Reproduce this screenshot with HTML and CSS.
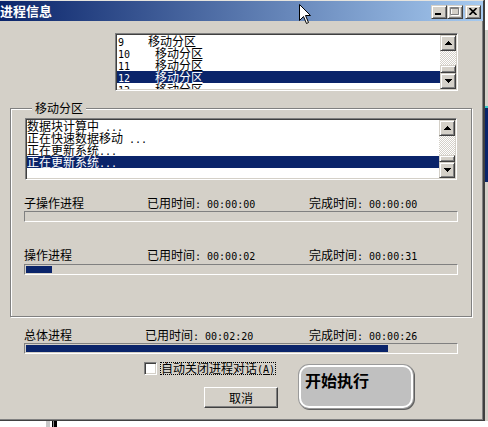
FILE: index.html
```html
<!DOCTYPE html>
<html lang="zh-CN">
<head>
<meta charset="utf-8">
<title>进程信息</title>
<link rel="stylesheet" href="styles.css">
</head>
<body>
<div class="screen">
  <div class="window">
    <div class="titlebar">
      <span class="title">进程信息</span>
      <div class="tbtns">
        <span class="tbtn"><svg width="8" height="7" viewBox="0 0 8 7"><rect x="0" y="5" width="6" height="2" fill="#000"/></svg></span>
        <span class="tbtn"><svg width="10" height="9" viewBox="0 0 10 9"><path d="M1.5 1.5h8v7h-8z" fill="none" stroke="#fff"/><path d="M0.5 0.5h8v7h-8z M0.5 1.5h8" fill="none" stroke="#808080"/></svg></span>
        <span class="tbtn close"><svg width="8" height="7" viewBox="0 0 8 7"><path d="M0.5 0 L7.5 7 M7.5 0 L0.5 7" stroke="#000" stroke-width="1.6"/></svg></span>
      </div>
    </div>
    <div class="client">
      <div class="listbox top">
        <div class="rows">
          <div class="row"><span class="a n n9">9</span>移动分区</div>
          <div class="row"><span class="a n">10</span>移动分区</div>
          <div class="row"><span class="a n">11</span>移动分区</div>
          <div class="row sel"><span class="a n">12</span>移动分区</div>
          <div class="row"><span class="a n">13</span>移动分区</div>
        </div>
        <div class="sb">
          <span class="sbtn"><svg width="7" height="4" viewBox="0 0 7 4"><path d="M3 0h1v1h1v1h1v1h1v1H0V3h1V2h1V1h1z" fill="#000"/></svg></span>
          <span class="track"></span>
          <span class="thumb"></span>
          <span class="sbtn"><svg width="7" height="4" viewBox="0 0 7 4"><path d="M0 0h7v1H6v1H5v1H4v1H3V3H2V2H1V1H0z" fill="#000"/></svg></span>
        </div>
      </div>

      <fieldset class="group">
        <legend>移动分区</legend>
        <div class="listbox glist">
          <div class="rows">
            <div class="row">数据块计算中<span class="a"> ...</span></div>
            <div class="row">正在快速数据移动<span class="a"> ...</span></div>
            <div class="row">正在更新系统<span class="a">...</span></div>
            <div class="row sel">正在更新系统<span class="a">...</span></div>
          </div>
          <div class="sb">
            <span class="sbtn"><svg width="7" height="4" viewBox="0 0 7 4"><path d="M3 0h1v1h1v1h1v1h1v1H0V3h1V2h1V1h1z" fill="#000"/></svg></span>
            <span class="track"></span>
            <span class="thumb"></span>
            <span class="sbtn"><svg width="7" height="4" viewBox="0 0 7 4"><path d="M0 0h7v1H6v1H5v1H4v1H3V3H2V2H1V1H0z" fill="#000"/></svg></span>
          </div>
        </div>

        <div class="prow p1">
          <span>子操作进程</span>
          <span>已用时间<span class="a">: 00:00:00</span></span>
          <span>完成时间<span class="a">: 00:00:00</span></span>
        </div>
        <div class="bar"><div class="fill" style="width:0px"></div></div>

        <div class="prow p2">
          <span>操作进程</span>
          <span>已用时间<span class="a">: 00:00:02</span></span>
          <span>完成时间<span class="a">: 00:00:31</span></span>
        </div>
        <div class="bar b2"><div class="fill" style="width:26px"></div></div>
      </fieldset>

      <div class="total">
        <div class="prow">
          <span>总体进程</span>
          <span>已用时间<span class="a">: 00:02:20</span></span>
          <span>完成时间<span class="a">: 00:00:26</span></span>
        </div>
        <div class="bar"><div class="fill" style="width:362px"></div></div>
      </div>

      <div class="bottom">
        <div class="bl">
          <div class="chk">
            <span class="box"></span>
            <span class="lbl">自动关闭进程对话<span class="a">(<u>A</u>)</span></span>
          </div>
          <button class="cancel">取消</button>
        </div>
        <button class="start">开始执行</button>
      </div>
    </div>
    <svg class="cursor" width="13" height="21" viewBox="0 0 13 21"><path d="M0.5 0.5 V16.5 L4.5 12.5 L7.5 19.5 L9.5 18.5 L6.5 11.5 H11.5 Z" fill="#fff" stroke="#000" stroke-linejoin="miter"/></svg>
  </div>
  <div class="side"></div>
</div>
<div class="below"></div>
</body>
</html>
```

FILE: styles.css
```css
* { box-sizing: border-box; }
html, body { margin: 0; padding: 0; }
body {
  width: 488px;
  height: 427px;
  overflow: hidden;
  background: #fff;
  font-family: "Noto Sans CJK SC", sans-serif;
  font-size: 12px;
  color: #000;
}
.a {
  font-family: "DejaVu Sans Mono", monospace;
  font-size: 10px;
}
.screen { display: flex; }

.window {
  position: relative;
  width: 484px;
  height: 421px;
  background: #d4d0c8;
  border-top: 1px solid #e6e4de;
  border-right: 1px solid #404040;
  border-bottom: 1px solid #404040;
  box-shadow: inset -1px -1px 0 #808080;
  display: flex;
  flex-direction: column;
}

.titlebar {
  height: 20px;
  flex: none;
  display: flex;
  align-items: center;
  justify-content: space-between;
  padding: 0 2px 0 0;
  background: linear-gradient(to right, #0a246a, #a6caf0);
}
.title {
  color: #fff;
  font-weight: bold;
  font-size: 13px;
  line-height: 16px;
  padding-left: 0;
}
.tbtns { display: flex; margin-top: 1px; }
.tbtn {
  width: 16px;
  height: 14px;
  display: flex;
  align-items: center;
  justify-content: center;
  background: #d4d0c8;
  border: 1px solid;
  border-color: #d4d0c8 #404040 #404040 #d4d0c8;
  box-shadow: inset 1px 1px 0 #fff, inset -1px -1px 0 #808080;
}
.tbtn svg { display: block; }
.tbtn.close { margin-left: 2px; }

.client {
  flex: 1;
  display: flex;
  flex-direction: column;
}

.listbox {
  display: flex;
  background: #fff;
  border: 1px solid;
  border-color: #808080 #fff #fff #808080;
  box-shadow: inset 1px 1px 0 #404040, inset -1px -1px 0 #d4d0c8;
  padding: 1px;
}
.listbox.top {
  margin: 12px 0 0 115px;
  width: 343px;
  height: 58px;
}
.rows {
  flex: 1;
  overflow: hidden;
  background: #fff;
}
.row {
  height: 12px;
  line-height: 12px;
  white-space: nowrap;
  padding-left: 1px;
}
.glist .row { padding-left: 0; }
.row.sel { background: #0a246a; color: #fff; }
.n { display: inline-block; width: 37px; }
.n.n9 { width: 30px; }

.sb {
  width: 16px;
  flex: none;
  display: flex;
  flex-direction: column;
}
.sbtn, .thumb {
  background: #d4d0c8;
  border: 1px solid;
  border-color: #d4d0c8 #404040 #404040 #d4d0c8;
  box-shadow: inset 1px 1px 0 #fff, inset -1px -1px 0 #808080;
}
.sbtn {
  height: 16px;
  flex: none;
  display: flex;
  align-items: center;
  justify-content: center;
}
.sbtn svg { display: block; }
.track {
  flex: 1;
  background: repeating-conic-gradient(#fff 0 25%, #d4d0c8 0 50%) 0 0 / 2px 2px;
}
.thumb { flex: none; height: 8px; }
.glist .thumb { height: 7px; }

.group {
  margin: 10px 0 0 10px;
  width: 462px;
  min-width: 0;
  border: 1px solid #808080;
  box-shadow: 1px 1px 0 #fff, inset 1px 1px 0 #fff;
  padding: 3px 14px 41px 14px;
}
.group legend {
  margin-left: 7px;
  padding: 0 3px;
  height: 14px;
  line-height: 14px;
  background: #d4d0c8;
}
.listbox.glist { height: 62px; }

.prow {
  display: grid;
  grid-template-columns: 123px 162px auto;
  height: 12px;
  line-height: 12px;
  white-space: nowrap;
  margin: 0 -1px;
}
.prow.p1 { margin-top: 17px; }
.prow.p2 { margin-top: 27px; }

.bar {
  height: 11px;
  margin: 2px -1px 0;
  border: 1px solid;
  border-color: #808080 #fff #fff #808080;
  padding: 1px;
}
.bar.b2 { margin-top: 3px; }
.fill { height: 100%; background: #0a246a; }

.total {
  margin: 12px 0 0 24px;
  width: 434px;
}
.total .prow {
  margin: 0;
  grid-template-columns: 121px 164px auto;
}
.total .bar { margin: 2px 0 0; }

.bottom {
  display: flex;
  align-items: flex-start;
  margin: 8px 0 0 144px;
}
.bl {
  width: 134px;
  display: flex;
  flex-direction: column;
}
.chk {
  display: flex;
  align-items: center;
  height: 13px;
}
.box {
  width: 13px;
  height: 13px;
  background: #fff;
  border: 1px solid;
  border-color: #808080 #fff #fff #808080;
  box-shadow: inset 1px 1px 0 #404040, inset -1px -1px 0 #d4d0c8;
}
.lbl {
  margin-left: 3px;
  padding: 0 1px;
  height: 13px;
  line-height: 12px;
  outline: 1px dotted #000;
  outline-offset: -1px;
  white-space: nowrap;
}
button {
  font-family: inherit;
  color: #000;
  margin: 0;
  cursor: default;
}
.cancel {
  align-self: flex-end;
  margin-top: 12px;
  width: 74px;
  height: 21px;
  padding: 0;
  font-size: 12px;
  line-height: 17px;
  background: #d4d0c8;
  border: 1px solid;
  border-color: #fff #404040 #404040 #fff;
  box-shadow: inset -1px -1px 0 #808080;
}
.start {
  margin: 3px 0 0 21px;
  width: 114px;
  height: 43px;
  border-radius: 10px;
  background: #c0c0c0;
  border: 2px solid #fff;
  box-shadow: 0 0 0 1px #9a9a9a, 1px 1px 0 1px #606060;
  font-size: 16px;
  font-weight: bold;
  line-height: 20px;
  text-align: left;
  padding: 3px 4px;
  display: flex;
  align-items: flex-start;
}

.cursor {
  position: absolute;
  left: 299px;
  top: 3px;
}

.side {
  width: 4px;
  height: 421px;
  border-left: 1px solid #404040;
  background: linear-gradient(to bottom, #fff 0 30px, #d4d0c8 30px 106px, #3cc 106px 108px, #0a246a 108px 182px, #d4d0c8 182px);
}
.below {
  margin-left: 46px;
  width: 11px;
  height: 6px;
  background: linear-gradient(to right, #c8c8c8 0 4px, #fff 4px 6px, #000 6px 7px, #888 7px 8px, #000 8px 11px);
}
```
